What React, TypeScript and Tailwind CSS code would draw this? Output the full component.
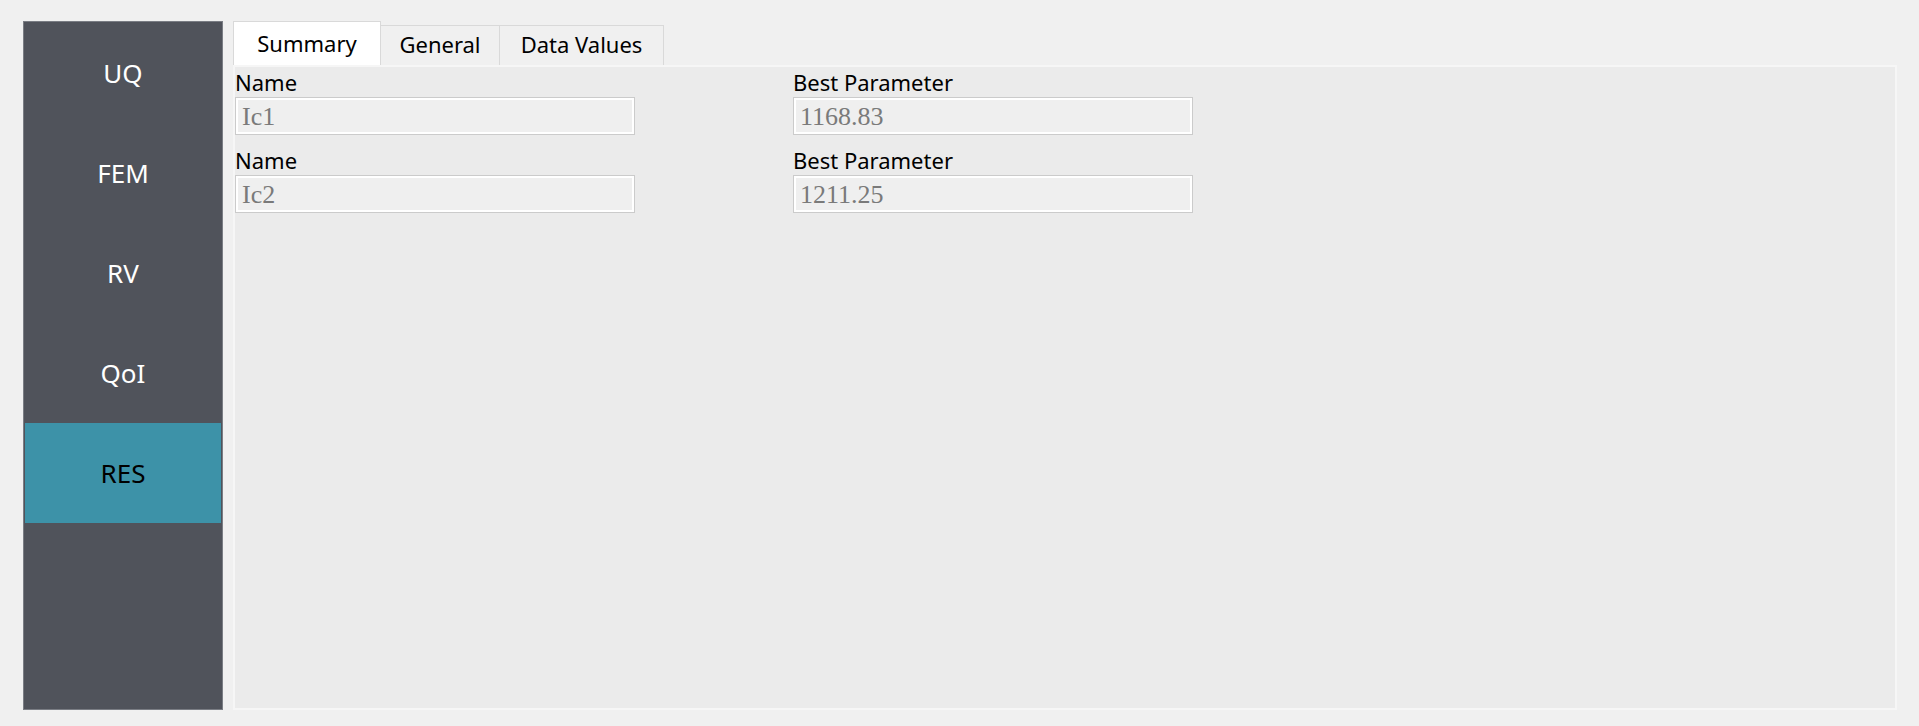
import React from 'react';

const navItems = ['UQ', 'FEM', 'RV', 'QoI', 'RES'];
const activeItem = 'RES';

const tabs = [
  { label: 'Summary', width: 'w-[148px]' },
  { label: 'General', width: 'w-[119px]' },
  { label: 'Data Values', width: 'w-[164px]' },
];

const results = [
  { name: 'Ic1', best: '1168.83' },
  { name: 'Ic2', best: '1211.25' },
];

const ReadOnlyField: React.FC<{ label: string; value: string }> = ({ label, value }) => (
  <div className="w-[400px]">
    <div className="h-[30px] leading-[30px] text-[22px] text-black">{label}</div>
    <div className="h-[38px] border border-[#cbcbcb] bg-white p-[2px]">
      <div className="h-full bg-[#efefef] pl-[4px] pt-[2px] leading-[30px] text-[26px] text-[#7a7a7a] font-['Liberation_Serif',serif]">
        {value}
      </div>
    </div>
  </div>
);

export default function App() {
  return (
    <div className="flex h-screen w-full bg-[#f0f0f0] pt-[21px] pb-[16px] pl-[23px] pr-[22px] gap-[10px] font-['Noto_Sans',sans-serif]">
      {/* Side navigation */}
      <div className="w-[200px] shrink-0 border border-[#7a7d84] bg-[#50535b] p-[1px]">
        {navItems.map((item) => (
          <div
            key={item}
            className={`flex h-[100px] items-center justify-center text-[26px] ${
              item === activeItem ? 'bg-[#3d92a8] text-black' : 'text-white'
            }`}
          >
            {item}
          </div>
        ))}
      </div>

      {/* Main area */}
      <div className="flex flex-1 flex-col">
        <div className="flex h-[44px] items-end">
          {tabs.map((tab, i) => (
            <div
              key={tab.label}
              className={`flex items-center justify-center border-t border-r border-[#d9d9d9] text-[22px] leading-[30px] text-black ${tab.width} ${
                i === 0 ? 'h-[44px] border-l bg-white pb-[2px]' : 'h-[40px] bg-[#f0f0f0] pb-[3px]'
              }`}
            >
              {tab.label}
            </div>
          ))}
        </div>

        <div className="flex-1 border-2 border-[#f6f6f6] bg-[#ebebeb]">
          {results.map((r, i) => (
            <div key={r.name} className={`flex gap-[158px] ${i > 0 ? 'mt-[10px]' : ''}`}>
              <ReadOnlyField label="Name" value={r.name} />
              <ReadOnlyField label="Best Parameter" value={r.best} />
            </div>
          ))}
        </div>
      </div>
    </div>
  );
}
